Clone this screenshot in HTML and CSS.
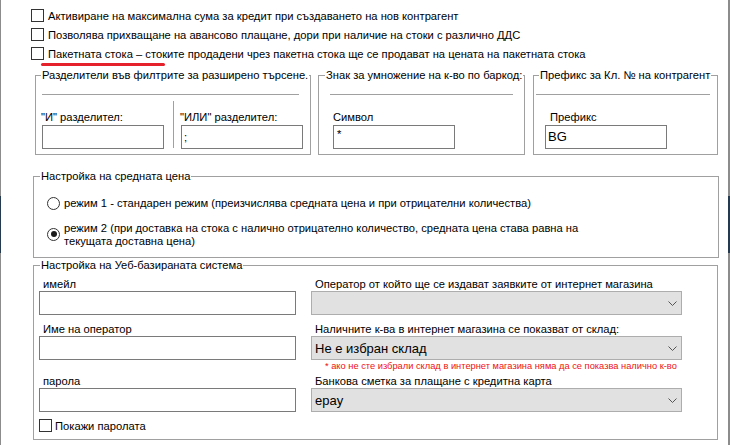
FILE: index.html
```html
<!DOCTYPE html>
<html lang="bg">
<head>
<meta charset="utf-8">
<title>Настройки</title>
<link rel="stylesheet" href="styles.css">
</head>
<body>
<div class="window">
  <div class="checks">
    <div class="check-row"><span class="box"></span><span>Активиране на максимална сума за кредит при създаването на нов контрагент</span></div>
    <div class="check-row"><span class="box"></span><span>Позволява прихващане на авансово плащане, дори при наличие на стоки с различно ДДС</span></div>
    <div class="check-row marked"><span class="box"></span><span>Пакетната стока – стоките продадени чрез пакетна стока ще се продават на цената на пакетната стока</span><span class="mark"></span></div>
  </div>

  <div class="fs-row">
    <fieldset class="fs fs-sep">
      <legend>Разделители във филтрите за разширено търсене.</legend>
      <div class="rule"></div>
      <div class="cols">
        <div class="col"><div class="lbl">"И" разделител:</div><div class="field"></div></div>
        <div class="vsep"></div>
        <div class="col col-b"><div class="lbl">"ИЛИ" разделител:</div><div class="field">;</div></div>
      </div>
    </fieldset>
    <fieldset class="fs fs-mul">
      <legend>Знак за умножение на к-во по баркод:</legend>
      <div class="rule"></div>
      <div class="cols">
        <div class="col"><div class="lbl">Символ</div><div class="field field-star">*</div></div>
      </div>
    </fieldset>
    <fieldset class="fs fs-pre">
      <legend>Префикс за Кл. № на контрагент</legend>
      <div class="rule"></div>
      <div class="cols">
        <div class="col"><div class="lbl">Префикс</div><div class="field field-big">BG</div></div>
      </div>
    </fieldset>
  </div>

  <fieldset class="fs fs-avg">
    <legend>Настройка на средната цена</legend>
    <div class="avg-body">
      <div class="radio-row"><span class="radio"></span><span>режим 1 - стандарен режим (преизчислява средната цена и при отрицателни количества)</span></div>
      <div class="radio-row"><span class="radio checked"></span><span class="radio-text">режим 2 (при доставка на стока с налично отрицателно количество, средната цена става равна на текущата доставна цена)</span></div>
    </div>
  </fieldset>

  <fieldset class="fs fs-web">
    <legend>Настройка на Уеб-базираната система</legend>
    <div class="web-body">
      <div class="web-col web-left">
        <div class="wlbl">имейл</div>
        <div class="field"></div>
        <div class="wlbl sp8">Име на оператор</div>
        <div class="field"></div>
        <div class="wlbl sp15">парола</div>
        <div class="field"></div>
        <div class="check-row small"><span class="box"></span><span>Покажи паролата</span></div>
      </div>
      <div class="web-col web-right">
        <div class="wlbl">Оператор от който ще се издават заявките от интернет магазина</div>
        <div class="select"><span></span><svg width="9" height="5" viewBox="0 0 9 5"><path d="M0.5 0.5 L4.5 4.5 L8.5 0.5" fill="none" stroke="#555" stroke-width="1"/></svg></div>
        <div class="wlbl sp8">Наличните к-ва в интернет магазина се показват от склад:</div>
        <div class="select"><span>Не е избран склад</span><svg width="9" height="5" viewBox="0 0 9 5"><path d="M0.5 0.5 L4.5 4.5 L8.5 0.5" fill="none" stroke="#555" stroke-width="1"/></svg></div>
        <div class="note">* ако не сте избрали склад в интернет магазина няма да се показва налично к-во</div>
        <div class="wlbl sp2">Банкова сметка за плащане с кредитна карта</div>
        <div class="select"><span>epay</span><svg width="9" height="5" viewBox="0 0 9 5"><path d="M0.5 0.5 L4.5 4.5 L8.5 0.5" fill="none" stroke="#555" stroke-width="1"/></svg></div>
      </div>
    </div>
  </fieldset>
</div>
</body>
</html>
```

FILE: styles.css
```css
html, body {
  margin: 0;
  padding: 0;
  background: #fff;
}

.window {
  width: 730px;
  height: 445px;
  box-sizing: border-box;
  overflow: hidden;
  border-style: solid;
  border-width: 0 2px 0 1px;
  border-image: linear-gradient(#8c8c8c 0 196px, #25394f 196px 253px, #8c8c8c 253px) 1;
  font-family: "Liberation Sans", Arial, sans-serif;
  font-size: 11.2px;
  color: #000;
  background: #fff;
}

.checks {
  padding: 6px 0 0 30px;
}

.check-row {
  position: relative;
  display: flex;
  align-items: center;
  gap: 4px;
  height: 19px;
  white-space: nowrap;
}

.check-row.small {
  height: 13px;
  margin-top: 7px;
  gap: 3px;
}

.box {
  width: 13px;
  height: 13px;
  box-sizing: border-box;
  border: 1px solid #333;
  background: #fff;
  flex: none;
}

.mark {
  position: absolute;
  left: 10px;
  top: 19px;
  width: 124px;
  height: 3px;
  border-radius: 2px;
  background: #e5222b;
}

.fs {
  margin: 0;
  padding: 0;
  min-width: 0;
  box-sizing: border-box;
  border: 1px solid #a0a0a0;
}

.fs legend {
  padding: 0 1px;
  margin-left: 5px;
  line-height: 14px;
  white-space: nowrap;
}

.fs-row {
  display: flex;
  gap: 7px;
  margin: 5px 0 0 34px;
}

.fs-sep { width: 276px; }
.fs-mul { width: 207px; }
.fs-mul legend { margin-left: 6px; }
.fs-pre { width: 185px; margin-left: 1px; }

.rule {
  height: 1px;
  background: #a0a0a0;
  margin-top: 12px;
}

.fs-sep .rule { margin-left: 6px; margin-right: 11px; }
.fs-mul .rule { margin-left: 11px; margin-right: 11px; }
.fs-pre .rule { margin-left: 2px; margin-right: 7px; }

.cols {
  display: flex;
  margin-top: 6px;
  padding-bottom: 5px;
}

.fs-sep .cols { padding-left: 6px; }
.fs-mul .cols { padding-left: 14px; }
.fs-pre .cols { padding-left: 11px; }
.fs-pre .lbl { padding-left: 5px; }

.col {
  width: 122px;
  padding-top: 9px;
}

.lbl {
  height: 14px;
  line-height: 14px;
  margin-bottom: 1px;
  white-space: nowrap;
}

.fs-sep .lbl { margin-left: -1px; }

.vsep {
  width: 1px;
  height: 47px;
  background: #a0a0a0;
  margin: 0 7px 0 9px;
  align-self: flex-start;
}

.field {
  height: 24px;
  box-sizing: border-box;
  border: 1px solid #7a7a7a;
  background: #fff;
  padding: 0 2px;
  line-height: 22px;
}

.field-star {
  line-height: 16px;
  padding-left: 3px;
}

.field-big {
  font-size: 13px;
  padding-left: 2px;
}

.fs-avg {
  width: 686px;
  margin: 14px 0 0 32px;
}

.fs-avg legend,
.fs-web legend {
  margin-left: 6px;
}

.avg-body {
  padding: 14px 0 9px 13px;
}

.radio-row {
  display: flex;
  align-items: center;
  gap: 4px;
  line-height: 13px;
}

.radio-row + .radio-row {
  margin-top: 12px;
}

.radio {
  width: 13px;
  height: 13px;
  box-sizing: border-box;
  border: 1px solid #333;
  border-radius: 50%;
  background: #fff;
  flex: none;
  display: flex;
  align-items: center;
  justify-content: center;
}

.radio-row + .radio-row .radio {
  margin-top: -2px;
}

.radio.checked::after {
  content: "";
  width: 6px;
  height: 6px;
  border-radius: 50%;
  background: #1a1a1a;
}

.radio-text {
  width: 540px;
}

.fs-web {
  width: 685px;
  margin: 0 0 0 32px;
}

.web-body {
  display: flex;
  gap: 15px;
  padding: 6px 0 7px 5px;
}

.web-left { width: 257px; }
.web-right { width: 371px; }

.wlbl {
  height: 13px;
  line-height: 13px;
  padding-left: 4px;
  white-space: nowrap;
}

.sp8 { margin-top: 8px; }
.sp15 { margin-top: 15px; }
.sp2 { margin-top: 2px; }

.select {
  height: 24px;
  box-sizing: border-box;
  border: 1px solid #adadad;
  background: #e1e1e1;
  display: flex;
  align-items: center;
  justify-content: space-between;
  padding: 0 4px 0 3px;
  font-size: 13px;
}

.select svg {
  display: block;
  flex: none;
}

.note {
  height: 13px;
  line-height: 13px;
  padding-left: 14px;
  font-size: 9.3px;
  color: #f01010;
  white-space: nowrap;
}
```
